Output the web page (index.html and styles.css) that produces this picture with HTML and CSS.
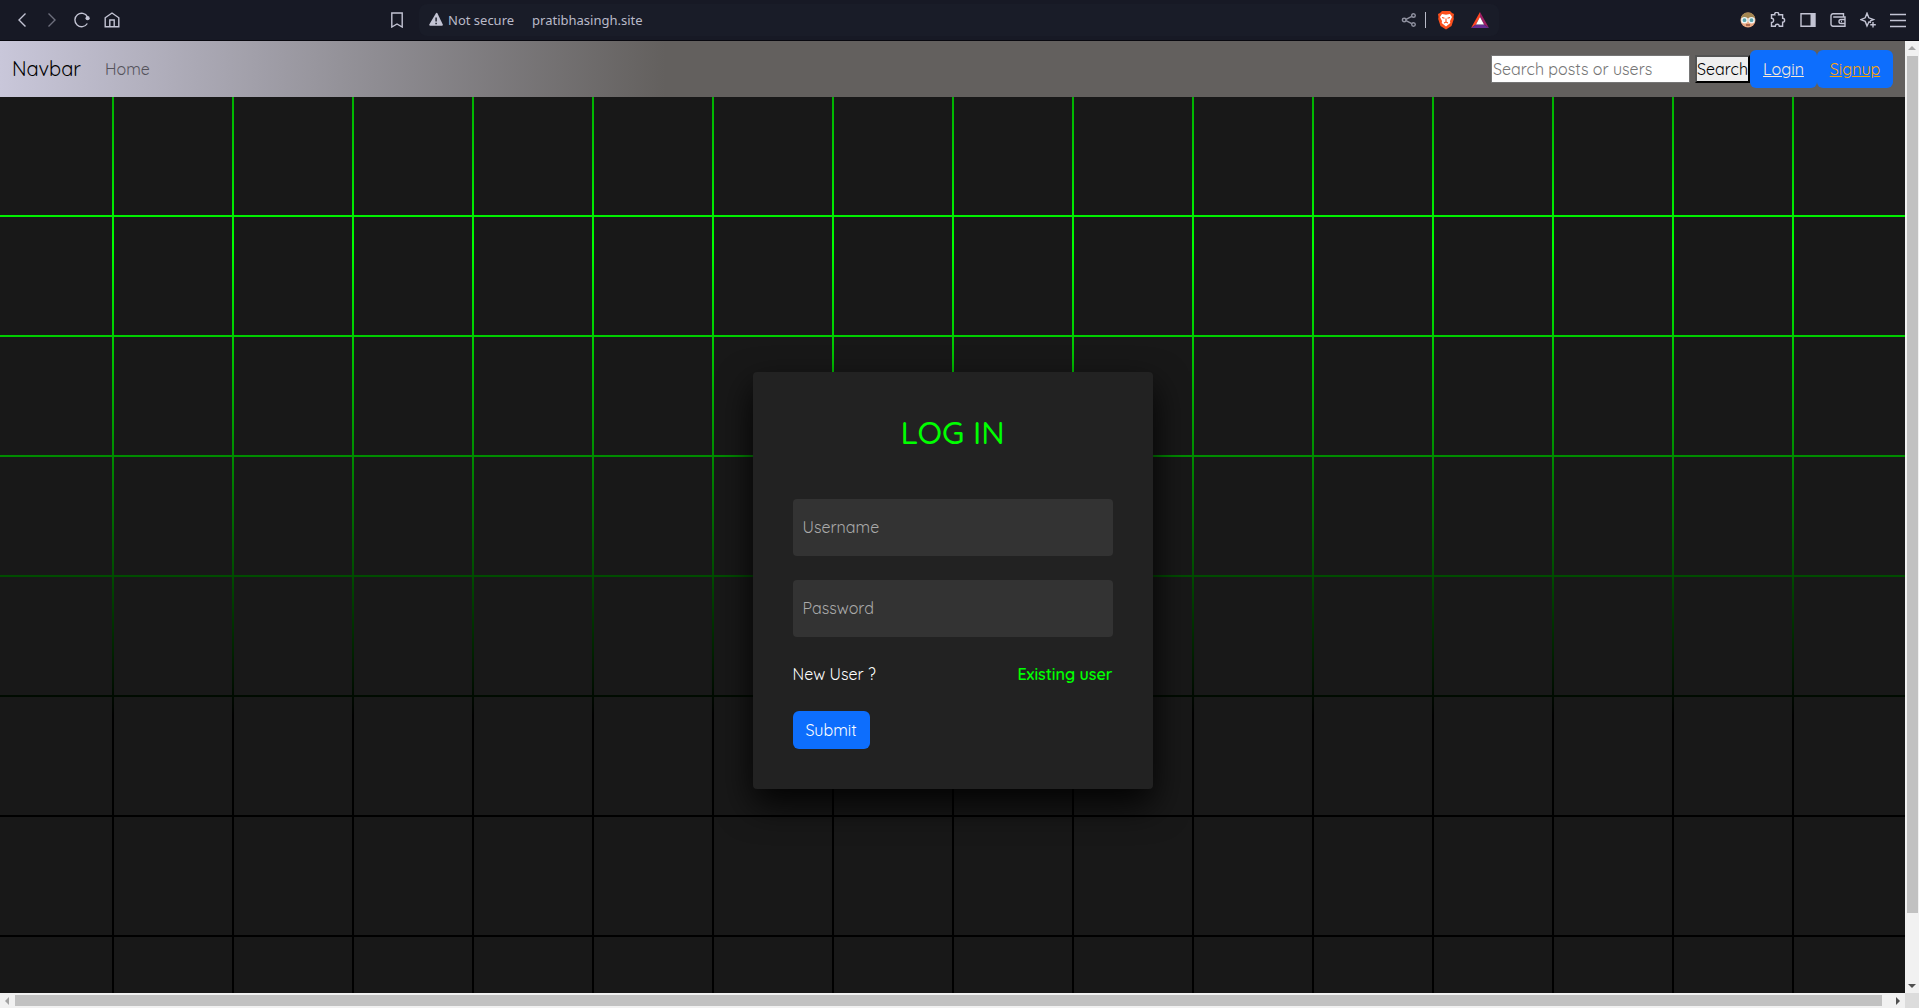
FILE: index.html
```html
<!DOCTYPE html>
<html lang="en">
<head>
<meta charset="utf-8">
<title>Log in</title>
<link rel="stylesheet" href="styles.css">
</head>
<body>
<header class="chrome">
  <div class="chrome-nav">
    <button class="icon" aria-label="Back"><svg width="16" height="16" viewBox="0 0 16 16"><path d="M11.500 1.500 5 8l6.500 6.500"/></svg></button>
    <button class="icon dim" aria-label="Forward"><svg width="16" height="16" viewBox="0 0 16 16"><path d="m4.500 1.500 6.500 6.500-6.500 6.500"/></svg></button>
    <button class="icon" aria-label="Reload"><svg width="16" height="16" viewBox="0 0 16 16"><path d="M13.300 11.500A6.700 6.700 0 1 1 13.500 4.800"/><circle class="fill" cx="13.600" cy="6.200" r="2.100"/></svg></button>
    <button class="icon" aria-label="Home"><svg width="16" height="16" viewBox="0 0 16 16"><path d="M1.200 5.800 8 1l6.800 4.800v9H1.200zM5.800 14.500V8h4.400v6.500"/></svg></button>
  </div>
  <div class="chrome-address">
    <button class="icon" aria-label="Bookmark"><svg width="16" height="16" viewBox="0 0 16 16"><path d="M2.800 1h10.400v14L8 12l-5.200 3z"/></svg></button>
    <div class="address-bar">
      <svg width="16" height="16" viewBox="0 0 16 16"><path class="fill" d="M8.800 1.500a1 1 0 0 1 1.700 0l5.200 10.800a1 1 0 0 1-.9 1.400H3.300a1 1 0 0 1-.9-1.400z"/><path class="mark" d="M9.100 5.500v4M9.100 10.700v1.500"/></svg>
      <span class="security">Not secure</span>
      <span class="url">pratibhasingh.site</span>
      <button class="icon share" aria-label="Share"><svg width="16" height="16" viewBox="0 0 16 16"><circle cx="3.200" cy="8" r="1.800"/><circle cx="12.500" cy="3.500" r="1.800"/><circle cx="12.500" cy="12.500" r="1.800"/><path d="m5 7.300 5.800-3M5 8.700l5.800 3"/></svg></button>
      <span class="rule"></span>
      <button class="icon" aria-label="Shields"><svg width="18" height="20" viewBox="0 0 18 20"><path fill="#fb4f1c" stroke="none" d="M5 1h8l2 2 2 1-.5 3 .3 2-2.300 7L9 19.500 3.500 16 1.200 9l.3-2L1 4l2-1z"/><path fill="#fff" stroke="none" d="m5 4 4 .8 4-.8 2 3-2 4 .3 2L9 16.500 4.700 13l.3-2-2-4z"/><path fill="none" stroke="#fb4f1c" stroke-width="1.100" d="m5 7.500 2.500.8M13 7.500l-2.500.8M9 8.500V12m-2 1 2-1 2 1"/></svg></button>
      <button class="icon" aria-label="Rewards"><svg width="18" height="16" viewBox="0 0 18 16"><path fill="#ff4724" stroke="none" d="M9 0v5l-4 7.500L0 16z"/><path fill="#9e1f63" stroke="none" d="M9 0l9 16-5-3.500L9 5z"/><path fill="#662d91" stroke="none" d="m0 16 5-3.500h8l5 3.500z"/><path fill="#fff" stroke="none" d="m9 5 4 7.500H5z"/></svg></button>
    </div>
  </div>
  <div class="chrome-tools">
    <button class="icon" aria-label="Profile"><svg width="16" height="16" viewBox="0 0 16 16"><circle cx="8" cy="8" r="7.500" fill="#e9a882" stroke="none"/><path d="M1 6a7.200 7.200 0 0 1 14 0z" fill="#a38652" stroke="none"/><circle cx="4.500" cy="8.200" r="2.600" fill="#5aa3ad" stroke="#edf5f5"/><circle cx="11.500" cy="8.200" r="2.600" fill="#5aa3ad" stroke="#edf5f5"/><path stroke="#8d4c38" d="M6 13h4"/></svg></button>
    <button class="icon" aria-label="Extensions"><svg width="16" height="16" viewBox="0 0 16 16"><path d="M1.500 2.800h3.300a2 2 0 1 1 3.800 0h4v3.500a2 2 0 1 1 0 4v4H9.300a2 2 0 0 0-4 0H1.500v-3.800a2.100 2.100 0 0 0 0-4.200z"/></svg></button>
    <button class="icon" aria-label="Sidebar"><svg width="16" height="16" viewBox="0 0 16 16"><path d="M1 1.700h14v12.600H1z"/><path class="fill" d="M10.500 1.500H15v13h-4.500z"/></svg></button>
    <button class="icon" aria-label="Wallet"><svg width="16" height="16" viewBox="0 0 16 16"><path d="M13.500 5V1.800H3A2 2 0 0 0 1 4v8a2 2 0 0 0 2 2.200h12V5H3.200M15 7.500h-4a2 2 0 0 0 0 4h4M11 9.500h1"/></svg></button>
    <button class="icon" aria-label="Leo AI"><svg width="16" height="16" viewBox="0 0 16 16"><path d="M11 10.500 9 9.800 7 14 5.200 9.400.8 7.600l4.400-1.800L7 1.200l1.800 4.600 4.700 1.800L10 9"/><path d="M13 10v5.500M10.300 12.800h5.500"/></svg></button>
    <button class="icon" aria-label="Menu"><svg width="16" height="16" viewBox="0 0 16 16"><path d="M0 2.500h16M0 8.500h16M0 14.500h16"/></svg></button>
  </div>
</header>
<div class="viewport">
  <div class="page">
    <nav class="navbar">
      <a class="brand" href="#">Navbar</a>
      <a class="home" href="#">Home</a>
      <form class="search">
        <input class="search-input" type="search" aria-label="Search" placeholder="Search posts or users">
        <button class="search-button" type="submit">Search</button>
      </form>
      <a class="btn login" href="#">Login</a>
      <a class="btn signup" href="#">Signup</a>
    </nav>
    <main class="board">
      <form class="card">
        <h2 class="title">LOG IN</h2>
        <input class="field" type="text" aria-label="Username" placeholder="Username">
        <input class="field" type="password" aria-label="Password" placeholder="Password">
        <div class="links">
          <a class="new-user" href="#">New User ?</a>
          <a class="existing" href="#">Existing user</a>
        </div>
        <button class="btn submit" type="submit">Submit</button>
      </form>
    </main>
  </div>
  <div class="bar vertical" aria-hidden="true">
    <span class="arrow up"></span><span class="track"><span class="thumb"></span></span><span class="arrow down"></span>
  </div>
  <div class="bar horizontal" aria-hidden="true">
    <span class="arrow left"></span><span class="track"><span class="thumb"></span></span><span class="arrow right"></span>
  </div>
  <div class="corner"></div>
</div>
</body>
</html>
```

FILE: styles.css
```css
* { box-sizing: border-box; }

body {
  margin: 0;
  height: 100vh;
  display: flex;
  flex-direction: column;
  overflow: hidden;
  background: #191919;
  font: 400 16px/24px Quicksand, Lato, sans-serif;
}

button { font: inherit; cursor: pointer; }
a { text-decoration: none; }

/* Browser toolbar */
.chrome {
  flex: none;
  height: 41px;
  display: grid;
  grid-template-columns: 389px minmax(0, 1fr) 420px;
  align-items: center;
  background: #171925;
  border-bottom: 1px solid #08080f;
  font: 400 13px/20px "Noto Sans", sans-serif;
  color: #b9bac8;
}
.chrome svg { display: block; fill: none; stroke: #c3c4d4; stroke-width: 1.4; }
.chrome .fill { fill: #c3c4d4; stroke: none; }
.chrome .mark { stroke: #171925; }
.icon { padding: 0; border: 0; background: none; }
.dim { opacity: .5; }
.chrome-nav { display: flex; gap: 14px; padding-left: 14px; }
.chrome-address { display: flex; align-items: center; gap: 14px; }
.address-bar {
  flex: 1;
  height: 32px;
  display: flex;
  align-items: center;
  padding: 0 10px 0 8px;
  border-radius: 8px;
  background: #191c28;
}
.security { margin: 0 18px 0 5px; }
.share { margin-left: auto; opacity: .7; }
.rule { width: 1px; height: 16px; margin: 0 11px 0 8px; background: #b9bac8; }
.rule + .icon { margin-right: 16px; }
.chrome-tools { display: flex; justify-content: flex-end; gap: 14px; padding-right: 13px; }

/* Scrolling area */
.viewport {
  flex: 1;
  min-height: 0;
  display: grid;
  grid-template: minmax(0, 1fr) 15px / minmax(0, 1fr) 14px;
}
.page { display: flex; flex-direction: column; }

.navbar {
  flex: none;
  height: 56px;
  display: flex;
  align-items: center;
  padding: 0 12px;
  background: linear-gradient(90deg, #c9c7da, #949299 340px, #63605e 665px);
}
.brand { margin-right: 24px; font-size: 20px; line-height: 30px; color: #000; }
.home { color: #55535c; }
.search { display: flex; align-items: center; gap: 5px; margin-left: auto; }
.search-input {
  width: 199px;
  height: 28px;
  padding: 0 1px;
  border: 1px solid #767676;
  background: #fff;
  font: inherit;
  appearance: none;
}
.search-input::placeholder { color: #757575; }
.search-button {
  width: 55px;
  height: 28px;
  padding: 0;
  border: 2px outset #000;
  background: #efefef;
  color: #000;
  line-height: 20px;
}
.btn {
  height: 38px;
  padding: 7px 12px;
  border: 0;
  border-radius: 6px;
  background: #0d6efd;
  color: #fff;
}
.login,
.signup { text-align: center; text-decoration: underline; }
.login { width: 67px; color: #faebd7; }
.signup { width: 76px; color: #ffa500; }

/* Tiles of 118px with 2px gaps that let the glow through */
.board {
  flex: 1;
  min-height: 0;
  display: flex;
  justify-content: center;
  align-items: flex-start;
  padding-top: 275px;
  background:
    conic-gradient(from 270deg at 118px 118px, #181818 90deg, transparent 0) -6px 0 / 120px 120px,
    linear-gradient(#00b000, #0f0 147px, #000 619px);
}
.card {
  width: 400px;
  padding: 40px;
  border-radius: 4px;
  background: #222;
  box-shadow: 0 15px 35px rgba(0, 0, 0, .9);
}
.title { margin: 0 0 47px; font-size: 32px; line-height: 40px; font-weight: 500; text-align: center; color: #0f0; }
.field {
  display: block;
  width: 100%;
  height: 57px;
  margin-bottom: 24px;
  padding: 0 10px 2px;
  border: 0;
  border-radius: 4px;
  background: #333;
  color: #fff;
  font: inherit;
}
.field::placeholder { color: #aaa; }
.links { display: flex; justify-content: space-between; margin-bottom: 24px; line-height: 26px; }
.new-user { color: #fff; }
.existing { color: #0f0; font-weight: 600; }
.submit { display: block; width: 77px; }

/* Scrollbars */
.bar { display: flex; align-items: center; background: #f1f1f1; }
.vertical { flex-direction: column; }
.track { flex: 1; display: flex; }
.thumb { background: #c1c1c1; }
.vertical .track { width: 11px; flex-direction: column; }
.vertical .thumb { height: 93%; }
.horizontal .track { height: 11px; }
.horizontal .thumb { flex: 1; margin-right: 8px; }
.arrow { border: 4px solid transparent; }
.arrow.up { margin: 5px 0 6px; border-top-width: 0; border-bottom-color: #a3a3a3; }
.arrow.down { margin: 6px 0 5px; border-bottom-width: 0; border-top-color: #505050; }
.arrow.left { margin: 0 6px 0 5px; border-left-width: 0; border-right-color: #a3a3a3; }
.arrow.right { margin: 0 5px 0 6px; border-right-width: 0; border-left-color: #505050; }
.corner { background: #dcdcdc; }
```
